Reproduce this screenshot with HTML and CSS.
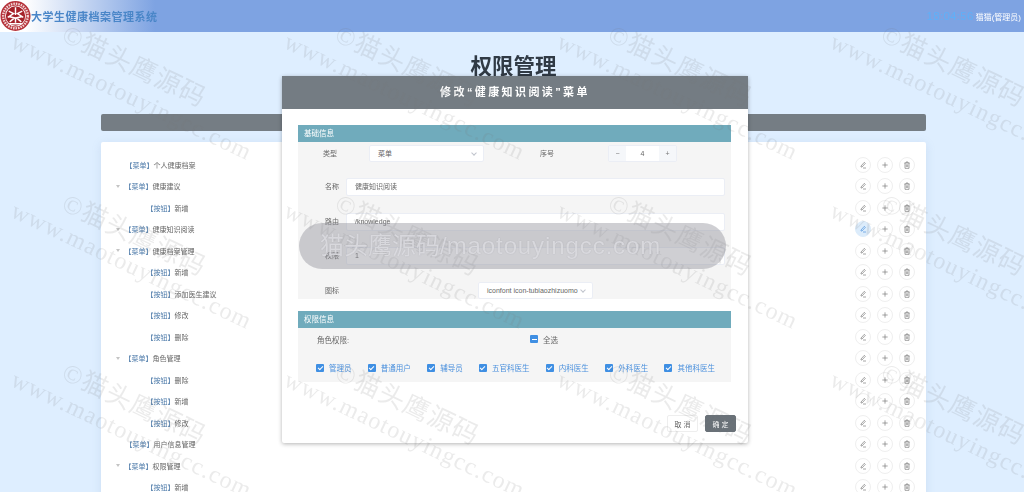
FILE: index.html
```html
<!DOCTYPE html>
<html lang="zh">
<head>
    <meta charset="UTF-8">
    <title>权限管理</title>
    <link rel="stylesheet" href="styles.css">
</head>
<body>
    <header class="topbar">
        <div class="brand">
            <svg class="logo" viewBox="0 0 32 32">
                <circle cx="16" cy="16" r="15.5" fill="#b5323a"/>
                <circle cx="16" cy="16" r="12.7" fill="none" stroke="#f3d5d5" stroke-width="2.4" stroke-dasharray="1.6 1"/>
                <circle cx="16" cy="16" r="10.8" fill="#fff"/>
                <circle cx="16" cy="16" r="10" fill="#a5222a"/>
                <path d="M16 7v8M9 11l5 2.500-6 4M23 11l-5 2.500 6 4M9 16.500l6 1.500-5 4M23 16.500l-6 1.500 5 4M9.500 24h13M16 18v5" fill="none" stroke="#fff" stroke-width="1.500"/>
            </svg>
            <span class="brand-name">大学生健康档案管理系统</span>
        </div>
        <div class="top-right">
            <span class="clock">18:04:56</span>
            <span class="user">猫猫(管理员)</span>
        </div>
    </header>

    <main class="page">
        <h1>权限管理</h1>
        <div class="grey-bar"></div>
        <section class="tree-card">
            <div class="tree" id="tree"></div>
        </section>
    </main>

    <div class="dialog">
        <div class="dialog-title">修改“健康知识阅读”菜单</div>
        <div class="dialog-body">
            <div class="section-head">基础信息</div>
            <div class="form-block base">
                <div class="row row-type">
                    <label class="lab-type">类型</label>
                    <div class="select select-type">菜单<i class="chev"></i></div>
                    <label class="lab-order">序号</label>
                    <div class="stepper"><span>−</span><b>4</b><span>+</span></div>
                </div>
                <div class="row">
                    <label class="lab">名称</label>
                    <div class="input">健康知识阅读</div>
                </div>
                <div class="row">
                    <label class="lab">路由</label>
                    <div class="input">/knowledge</div>
                </div>
                <div class="row">
                    <label class="lab">权限</label>
                    <div class="input">1</div>
                </div>
                <div class="row row-icon">
                    <label class="lab">图标</label>
                    <div class="select select-icon">iconfont icon-tubiaozhizuomo<i class="chev"></i></div>
                </div>
            </div>
            <div class="section-head second">权限信息</div>
            <div class="form-block perm">
                <div class="perm-top">
                    <span class="perm-label">角色权限:</span>
                    <label class="check all"><i class="box box-mixed"></i>全选</label>
                </div>
                <div class="perm-roles">
                    <label class="check"><i class="box"></i>管理员</label>
                    <label class="check"><i class="box"></i>普通用户</label>
                    <label class="check"><i class="box"></i>辅导员</label>
                    <label class="check"><i class="box"></i>五官科医生</label>
                    <label class="check"><i class="box"></i>内科医生</label>
                    <label class="check"><i class="box"></i>外科医生</label>
                    <label class="check"><i class="box"></i>其他科医生</label>
                </div>
            </div>
            <div class="dialog-foot">
                <button class="btn">取 消</button>
                <button class="btn btn-ok">确 定</button>
            </div>
        </div>
    </div>

    <div class="marks" id="marks"></div>

    <div class="toast">猫头鹰源码/<span class="toast-en">maotouyingcc.com</span></div>

    <script src="app.js"></script>
</body>
</html>
```
FILE: styles.css
```css
* {
    box-sizing: border-box;
}
html, body {
    height: 492px;
    overflow: hidden;
}
body {
    margin: 0;
    font-family: "Liberation Sans", "Noto Sans CJK SC", sans-serif;
    background-color: #deeeff;
    color: #606266;
    filter: blur(0.3px);
}
.topbar {
    height: 32px;
    display: flex;
    justify-content: space-between;
    align-items: center;
    background: linear-gradient(90deg, #fff 0, #fff 25px, #7ea3e2 155px);
}
.brand {
    display: flex;
    align-items: center;
}
.logo {
    width: 31px;
    height: 32px;
}
.brand-name {
    font-size: 11px;
    font-weight: bold;
    color: #4a86c8;
    letter-spacing: 0.5px;
}
.top-right {
    display: flex;
    align-items: center;
    padding-right: 3px;
}
.clock {
    font-size: 11.5px;
    color: #5fb0f8;
    letter-spacing: 0.3px;
    margin-right: 2px;
}
.user {
    font-size: 8px;
    color: #fff;
}
.page {
    padding: 0 98px 0 101px;
}
h1 {
    margin: 22px 0 0;
    height: 26px;
    text-align: center;
    font-size: 21.5px;
    line-height: 26px;
    color: #303a45;
}
.grey-bar {
    height: 17px;
    margin-top: 34px;
    background-color: #757d84;
    border-radius: 2px;
}
.tree-card {
    height: 360px;
    margin-top: 11px;
    padding: 12px 11px 0 0;
    background-color: #fff;
    border-radius: 2px;
    box-shadow: 0 2px 10px rgba(120, 150, 190, 0.18);
}
.tree-row {
    height: 21.5px;
    display: flex;
    align-items: center;
    font-size: 7px;
    color: #666;
}
.arrow {
    width: 0;
    height: 0;
    margin-left: 14.5px;
    margin-right: 5px;
    border: 2.5px solid transparent;
    border-top: 3px solid #c4c4c4;
    border-bottom: 0;
}
.noarrow {
    width: 5px;
    margin-left: 14.5px;
    margin-right: 5px;
}
.level2 {
    padding-left: 21px;
}
.tag {
    color: #4a78a8;
}
.ops {
    margin-left: auto;
    display: flex;
    gap: 6px;
}
.op {
    width: 16px;
    height: 16px;
    display: flex;
    align-items: center;
    justify-content: center;
    border: 1px solid #efefef;
    border-radius: 50%;
    color: #777;
    background: #fff;
}
.op svg {
    width: 8px;
    height: 8px;
}
.op-active {
    background-color: #dcecfb;
    border-color: #dcecfb;
    color: #4a90dd;
}
.dialog {
    position: absolute;
    left: 282px;
    top: 76px;
    width: 466px;
    height: 367px;
    background-color: #fff;
    border-radius: 2px;
    box-shadow: 0 1px 4px rgba(0, 0, 0, 0.3);
}
.dialog-title {
    height: 33px;
    text-align: center;
    line-height: 33px;
    font-size: 11px;
    font-weight: bold;
    letter-spacing: 2.4px;
    color: #fff;
    background-color: #747c83;
}
.dialog-body {
    padding: 16px 17px 0 16px;
}
.section-head {
    height: 17px;
    line-height: 17px;
    padding-left: 6px;
    font-size: 7.5px;
    color: #fff;
    background-color: #70abbc;
}
.section-head.second {
    margin-top: 12px;
}
.form-block {
    background-color: #f5f5f5;
    font-size: 7px;
    color: #666;
}
.base {
    height: 157px;
    padding-top: 3px;
}
.row {
    height: 34.5px;
    display: flex;
    align-items: flex-start;
    padding-right: 6px;
}
.row label {
    line-height: 17px;
}
.row-type {
    height: 33px;
}
.lab-type {
    margin-left: 25px;
    width: 46px;
}
.lab {
    margin-left: 27px;
    width: 21px;
}
.lab-order {
    margin-left: 56px;
    width: 68px;
}
.input {
    flex: 1;
    height: 18px;
    padding-left: 8px;
    line-height: 16px;
    background-color: #fff;
    border: 1px solid #ebeef5;
    border-radius: 2px;
}
.select {
    position: relative;
    height: 17px;
    line-height: 15px;
    padding-left: 8px;
    background-color: #fff;
    border: 1px solid #ebeef5;
    border-radius: 2px;
}
.select-type {
    width: 115px;
}
.select-icon {
    width: 115px;
    margin-left: 132px;
    white-space: nowrap;
}
.chev {
    position: absolute;
    right: 7px;
    top: 5px;
    width: 4px;
    height: 4px;
    border-right: 1px solid #c0c4cc;
    border-bottom: 1px solid #c0c4cc;
    transform: rotate(45deg);
}
.stepper {
    width: 69px;
    height: 17px;
    display: flex;
    border: 1px solid #ebeef5;
    border-radius: 2px;
    background-color: #fff;
    line-height: 15px;
    text-align: center;
}
.stepper span {
    width: 17px;
    color: #777;
    background-color: #f5f7fa;
}
.stepper b {
    flex: 1;
    font-weight: normal;
}
.row-icon {
    height: 17.5px;
}
.perm {
    height: 54px;
    font-size: 7.5px;
}
.perm-top {
    display: flex;
    height: 22px;
    align-items: center;
    padding-left: 19px;
}
.perm-label {
    width: 213px;
}
.check {
    display: flex;
    align-items: center;
    color: #4a90dd;
    white-space: nowrap;
}
.check.all {
    color: #666;
}
.box {
    width: 8px;
    height: 8px;
    margin-right: 5px;
    border-radius: 1px;
    background-color: #3f8fe3;
    position: relative;
}
.box::after {
    content: "";
    position: absolute;
    left: 2.5px;
    top: 1px;
    width: 2px;
    height: 4px;
    border-right: 1px solid #fff;
    border-bottom: 1px solid #fff;
    transform: rotate(45deg);
}
.box-mixed::after {
    left: 1.5px;
    top: 3.5px;
    width: 5px;
    height: 1px;
    border: 0;
    background-color: #fff;
    transform: none;
}
.perm-roles {
    display: flex;
    justify-content: space-between;
    padding: 12px 16px 0 18px;
}
.dialog-foot {
    display: flex;
    justify-content: flex-end;
    gap: 7px;
    margin: 33px -5px 0 0;
}
.btn {
    width: 31px;
    height: 17px;
    padding: 0;
    font-family: inherit;
    font-size: 7px;
    color: #666;
    background-color: #fff;
    border: 1px solid #eee;
    border-radius: 2px;
}
.btn-ok {
    color: #fff;
    background-color: #697178;
    border-color: #697178;
}
.toast {
    position: absolute;
    left: 299px;
    top: 223px;
    width: 427px;
    height: 46px;
    padding-left: 21px;
    border-radius: 23px;
    background-color: rgba(140, 140, 150, 0.42);
    font-size: 24px;
    line-height: 46px;
    color: rgba(238, 238, 242, 0.7);
    text-shadow: 0 0 1px rgba(110, 110, 120, 0.45);
    white-space: nowrap;
    overflow: hidden;
}
.toast-en {
    letter-spacing: 0.9px;
}
.marks {
    position: absolute;
    left: 0;
    top: 0;
    width: 1024px;
    height: 492px;
    overflow: hidden;
    pointer-events: none;
}
.mark {
    position: absolute;
    width: 270px;
    transform: rotate(25.5deg);
    transform-origin: 0 0;
    font-family: "Liberation Serif", "Noto Sans CJK SC", serif;
    color: rgba(120, 120, 120, 0.15);
    white-space: nowrap;
}
.mark-cn {
    display: block;
    margin-left: 43px;
    font-size: 26px;
    line-height: 28px;
    letter-spacing: 1px;
}
.mark-en {
    display: block;
    font-size: 24px;
    line-height: 28px;
    letter-spacing: 1.2px;
}
```
FILE: app.js
```js
var rows = [
    [1, "菜单", "个人健康档案", false],
    [1, "菜单", "健康建议", true],
    [2, "按钮", "新增"],
    [1, "菜单", "健康知识阅读", true, true],
    [1, "菜单", "健康档案管理", true],
    [2, "按钮", "新增"],
    [2, "按钮", "添加医生建议"],
    [2, "按钮", "修改"],
    [2, "按钮", "删除"],
    [1, "菜单", "角色管理", true],
    [2, "按钮", "删除"],
    [2, "按钮", "新增"],
    [2, "按钮", "修改"],
    [1, "菜单", "用户信息管理", false],
    [1, "菜单", "权限管理", true],
    [2, "按钮", "新增"]
];

var icons = {
    edit: '<svg viewBox="0 0 12 12" fill="none" stroke="currentColor"><path d="M3 7.500 8 2l1.500 1.500-5 5.500H3zM6 10.500h4.500"/></svg>',
    add: '<svg viewBox="0 0 12 12" fill="none" stroke="currentColor"><path d="M6 2v8M2 6h8"/></svg>',
    del: '<svg viewBox="0 0 12 12" fill="none" stroke="currentColor"><path d="M2 3h8M4.500 3V1.500h3V3M3 3v8h6V3M5 5v4M7 5v4"/></svg>'
};

var html = "";
rows.forEach(function(r) {
    var start = r[3] ? '<span class="arrow"></span>' : '<span class="noarrow"></span>';
    var active = r[4] ? " op-active" : "";
    html += '<div class="tree-row' + (r[0] === 2 ? " level2" : "") + '">' + start +
        '<span class="tag">【' + r[1] + '】</span>' + r[2] +
        '<span class="ops"><span class="op' + active + '">' + icons.edit + '</span>' +
        '<span class="op">' + icons.add + '</span>' +
        '<span class="op">' + icons.del + '</span></span></div>';
});
document.getElementById("tree").innerHTML = html;

// filigrane répété
var marks = "";
[-167, 2, 171, 340].forEach(function(y) {
    [-242, 31, 304, 577, 850].forEach(function(x) {
        marks += '<div class="mark" style="left:' + x + 'px;top:' + y + 'px">' +
            '<span class="mark-cn">©猫头鹰源码</span>' +
            '<span class="mark-en">www.maotouyingcc.com</span></div>';
    });
});
document.getElementById("marks").innerHTML = marks;
```
